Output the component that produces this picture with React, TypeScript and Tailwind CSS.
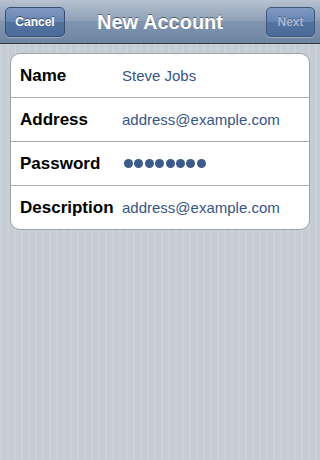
import React from "react";

const font = { fontFamily: '"Liberation Sans", Arial, Helvetica, sans-serif' };

function Row({ label, children, last }: { label: string; children: React.ReactNode; last?: boolean }) {
  return (
    <div className={`flex items-center ${last ? "h-[43px]" : "h-[44px] border-b border-[#ababab]"}`}>
      <div className="w-[111px] shrink-0 pl-[9px] text-[17px] font-bold text-black leading-none">{label}</div>
      <div className="flex-1 text-[15px] text-[#385487] leading-none">{children}</div>
    </div>
  );
}

export default function App() {
  return (
    <div
      className="w-[320px] h-[460px] overflow-hidden flex flex-col bg-[repeating-linear-gradient(90deg,#cbd2d8_0px,#cbd2d8_2px,#c5ccd4_2px,#c5ccd4_7px)]"
      style={font}
    >
      {/* Nav bar */}
      <div className="h-[44px] shrink-0 flex items-center justify-between px-[5px] border-b border-[#2d3642] bg-[linear-gradient(180deg,#b7c2d1_0%,#a2b0c3_25%,#8c9eb6_50%,#8195af_50%,#6d84a2_100%)] relative">
        <div className="h-[30px] w-[60px] rounded-[5px] border border-[#374e72] bg-[linear-gradient(180deg,#7f99c2_0%,#6684b2_50%,#54739f_50%,#4a6b9b_100%)] flex items-center justify-center shadow-[0_1px_0_rgba(255,255,255,0.3)]">
          <span className="text-[12px] font-bold text-white [text-shadow:0_-1px_0_rgba(0,0,0,0.45)]">Cancel</span>
        </div>
        <div className="absolute left-0 right-0 top-0 h-[43px] flex items-center justify-center pointer-events-none">
          <span className="text-[20px] font-bold text-white [text-shadow:0_-1px_0_rgba(0,0,0,0.45)]">New Account</span>
        </div>
        <div className="h-[30px] w-[49px] rounded-[5px] border border-[#3f5679] bg-[linear-gradient(180deg,#7f99c2_0%,#6684b2_50%,#54739f_50%,#4a6b9b_100%)] flex items-center justify-center shadow-[0_1px_0_rgba(255,255,255,0.3)]">
          <span className="text-[12px] font-bold text-[#a9b8d0] [text-shadow:0_-1px_0_rgba(0,0,0,0.3)]">Next</span>
        </div>
      </div>

      {/* Card */}
      <div className="mx-[10px] mt-[9px] rounded-[10px] border border-[#a3a3a3] bg-white overflow-hidden">
        <Row label="Name">Steve Jobs</Row>
        <Row label="Address">address@example.com</Row>
        <Row label="Password">
          <div className="flex gap-[1.4px] pl-[2px]">
            {Array.from({ length: 8 }).map((_, i) => (
              <div key={i} className="w-[9px] h-[9px] rounded-full bg-[#3c5a8a]" />
            ))}
          </div>
        </Row>
        <Row label="Description" last>
          address@example.com
        </Row>
      </div>
    </div>
  );
}
